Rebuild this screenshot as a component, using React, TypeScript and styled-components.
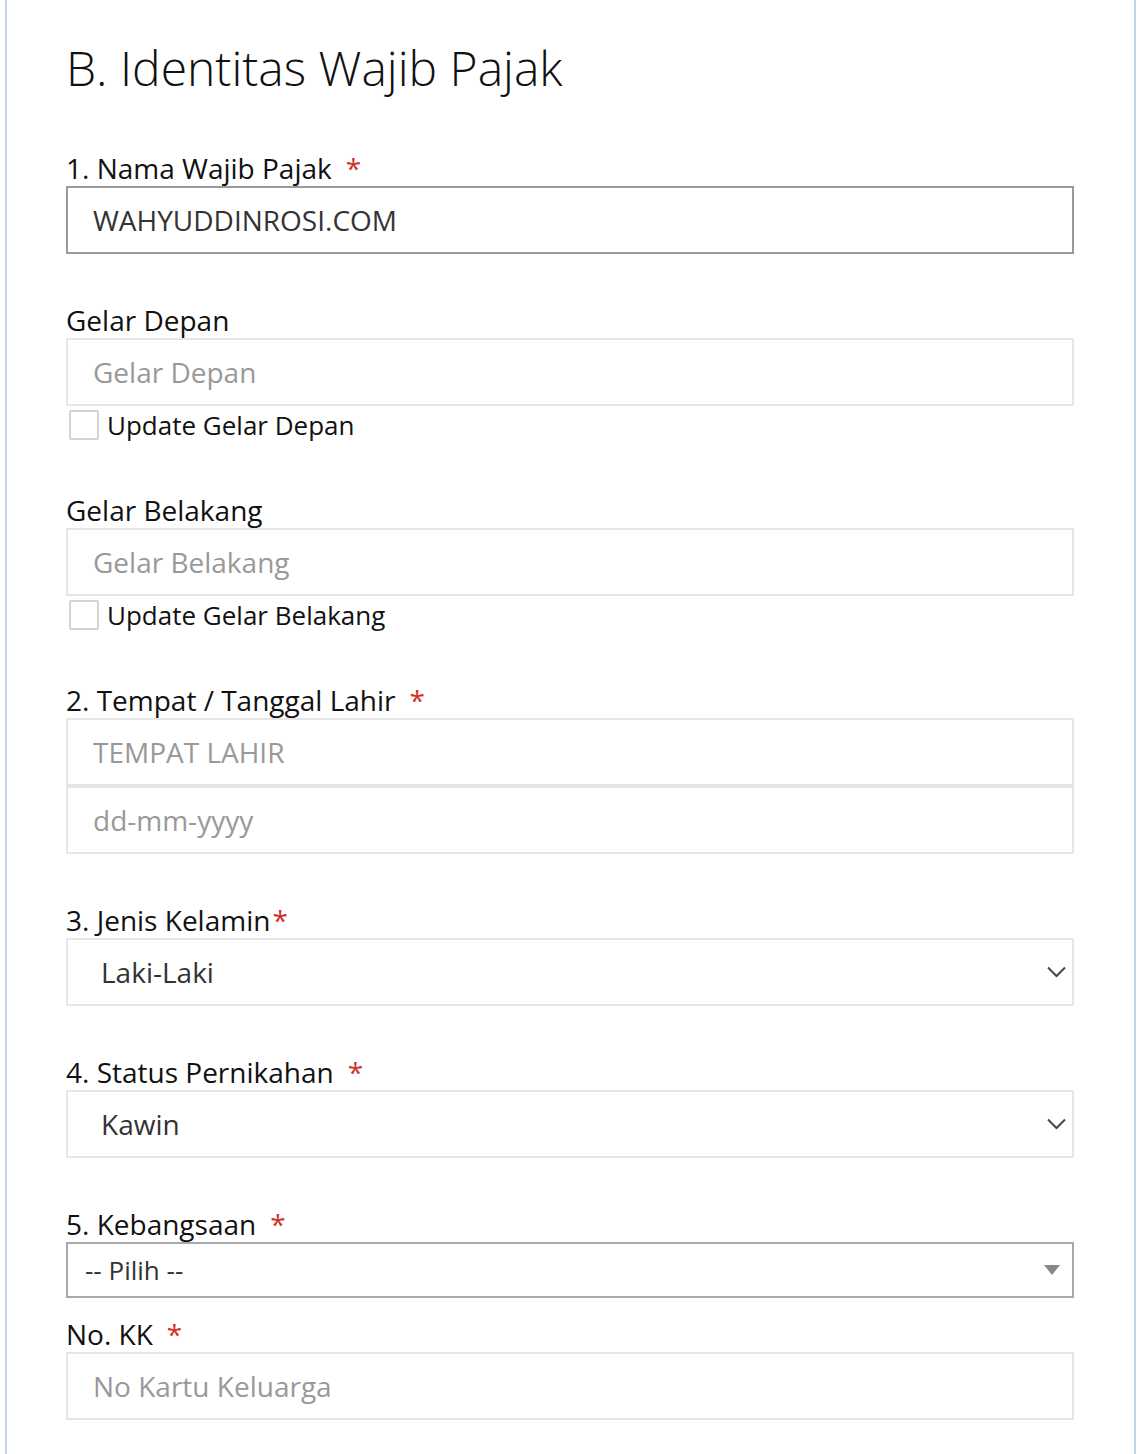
import React from 'react'
import styled, { createGlobalStyle } from 'styled-components'

const GlobalStyle = createGlobalStyle`
    html, body {
        margin: 0;
        padding: 0;
        background: #ffffff;
    }
    body {
        font-family: 'Open Sans', 'Noto Sans', sans-serif;
        color: #111;
    }
`

const Panel = styled.section`
    margin-left: 5px;
    width: 1131px;
    min-height: 1454px;
    box-sizing: border-box;
    border-left: 2px solid #c3d2ef;
    border-right: 2px solid #c3d2ef;
    padding: 36px 60px 0 59px;
`

const Title = styled.h2`
    margin: 0 0 50px;
    font-size: 48px;
    font-weight: 300;
    line-height: 64px;
    color: #111;
`

const Group = styled.div<{ $gap?: number }>`
    margin-bottom: ${p => (p.$gap ?? 48)}px;
`

const Label = styled.label`
    display: block;
    font-size: 28px;
    line-height: 36px;
    color: #111;
`

const Required = styled.span<{ $tight?: boolean }>`
    color: #d0312d;
    margin-left: ${p => (p.$tight ? 2 : 14)}px;
`

const Input = styled.input<{ $strong?: boolean }>`
    display: block;
    width: 100%;
    height: 68px;
    box-sizing: border-box;
    margin: 0;
    padding: 0 25px;
    font-family: 'Open Sans', sans-serif;
    font-size: 28px;
    color: #333;
    background: #fff;
    border: 2px solid ${p => (p.$strong ? '#9a9a9a' : '#e6e6e6')};
    border-radius: 0;
    outline: none;

    &::placeholder {
        color: #999;
    }
`

const Stack = styled.div`
    display: flex;
    flex-direction: column;
`

const CheckRow = styled.label`
    display: flex;
    align-items: center;
    gap: 8px;
    margin-top: 2px;
    padding-left: 3px;
    font-size: 26px;
    line-height: 34px;
    color: #111;
`

const CheckBox = styled.span`
    width: 30px;
    height: 30px;
    box-sizing: border-box;
    border: 2px solid #d4d4d4;
    border-radius: 2px;
    background: #fff;
`

const SelectBox = styled.div<{ $native?: boolean }>`
    display: flex;
    align-items: center;
    justify-content: space-between;
    height: ${p => (p.$native ? 56 : 68)}px;
    box-sizing: border-box;
    padding: ${p => (p.$native ? '0 12px 0 17px' : '0 0 0 33px')};
    border: 2px solid ${p => (p.$native ? '#a9a9a9' : '#e6e6e6')};
    background: #fff;
    font-size: ${p => (p.$native ? 26 : 28)}px;
    color: #333;
`

const Chevron = () => (
    <svg width="30" height="20" viewBox="0 0 30 20">
        <path d="M6 5.5 L14.5 14 L23 5.5" fill="none" stroke="#444" strokeWidth="2" />
    </svg>
)

const Caret = () => (
    <svg width="16" height="10" viewBox="0 0 16 10">
        <path d="M0 0 H16 L8 10 Z" fill="#888" />
    </svg>
)

const App = () => (
    <>
        <GlobalStyle />
        <Panel>
            <Title>B. Identitas Wajib Pajak</Title>

            <Group>
                <Label>
                    1. Nama Wajib Pajak<Required>*</Required>
                </Label>
                <Input $strong defaultValue="WAHYUDDINROSI.COM" />
            </Group>

            <Group $gap={50}>
                <Label>Gelar Depan</Label>
                <Input placeholder="Gelar Depan" />
                <CheckRow>
                    <CheckBox />
                    Update Gelar Depan
                </CheckRow>
            </Group>

            <Group $gap={50}>
                <Label>Gelar Belakang</Label>
                <Input placeholder="Gelar Belakang" />
                <CheckRow>
                    <CheckBox />
                    Update Gelar Belakang
                </CheckRow>
            </Group>

            <Group>
                <Label>
                    2. Tempat / Tanggal Lahir<Required>*</Required>
                </Label>
                <Stack>
                    <Input placeholder="TEMPAT LAHIR" />
                    <Input placeholder="dd-mm-yyyy" />
                </Stack>
            </Group>

            <Group>
                <Label>
                    3. Jenis Kelamin<Required $tight>*</Required>
                </Label>
                <SelectBox>
                    <span>Laki-Laki</span>
                    <Chevron />
                </SelectBox>
            </Group>

            <Group>
                <Label>
                    4. Status Pernikahan<Required>*</Required>
                </Label>
                <SelectBox>
                    <span>Kawin</span>
                    <Chevron />
                </SelectBox>
            </Group>

            <Group $gap={18}>
                <Label>
                    5. Kebangsaan<Required>*</Required>
                </Label>
                <SelectBox $native>
                    <span>-- Pilih --</span>
                    <Caret />
                </SelectBox>
            </Group>

            <Group>
                <Label>
                    No. KK<Required>*</Required>
                </Label>
                <Input placeholder="No Kartu Keluarga" />
            </Group>
        </Panel>
    </>
)

export default App
